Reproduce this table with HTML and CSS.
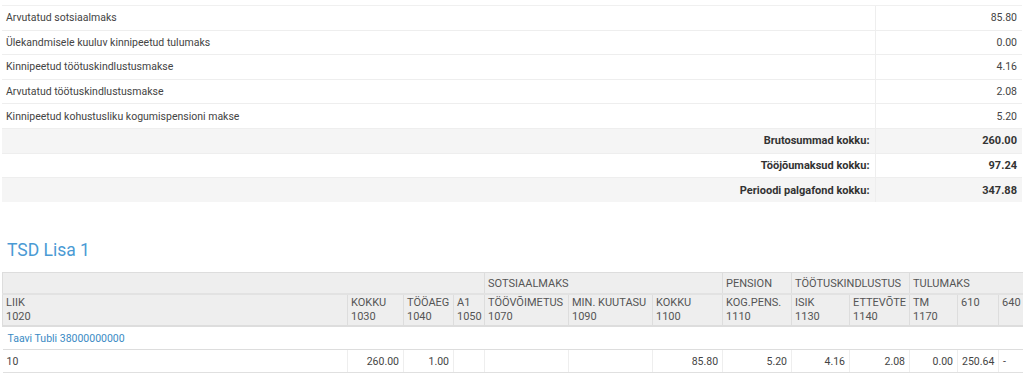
FILE: index.html
```html
<!DOCTYPE html>
<html lang="et">
<head>
<meta charset="utf-8">
<title>Palgafond</title>
<link rel="stylesheet" href="styles.css">
</head>
<body>
<table class="sum">
  <colgroup><col class="c-label"><col class="c-val"></colgroup>
  <tbody>
    <tr><td>Arvutatud sotsiaalmaks</td><td class="num">85.80</td></tr>
    <tr><td>Ülekandmisele kuuluv kinnipeetud tulumaks</td><td class="num">0.00</td></tr>
    <tr><td>Kinnipeetud töötuskindlustusmakse</td><td class="num">4.16</td></tr>
    <tr><td>Arvutatud töötuskindlustusmakse</td><td class="num">2.08</td></tr>
    <tr><td>Kinnipeetud kohustusliku kogumispensioni makse</td><td class="num">5.20</td></tr>
    <tr class="total shade"><td class="num">Brutosummad kokku:</td><td class="num">260.00</td></tr>
    <tr class="total"><td class="num">Tööjõumaksud kokku:</td><td class="num">97.24</td></tr>
    <tr class="total shade"><td class="num">Perioodi palgafond kokku:</td><td class="num">347.88</td></tr>
  </tbody>
</table>

<h2 class="title">TSD Lisa 1</h2>

<table class="tsd">
  <colgroup>
    <col class="w1"><col class="w2"><col class="w3"><col class="w4"><col class="w5"><col class="w6"><col class="w7"><col class="w8"><col class="w9"><col class="w10"><col class="w11"><col class="w12"><col class="w13">
  </colgroup>
  <thead>
    <tr class="group">
      <th colspan="4"></th>
      <th colspan="3">SOTSIAALMAKS</th>
      <th>PENSION</th>
      <th colspan="2">TÖÖTUSKINDLUSTUS</th>
      <th colspan="3" class="last">TULUMAKS</th>
    </tr>
    <tr class="cols">
      <th>LIIK<br>1020</th>
      <th>KOKKU<br>1030</th>
      <th>TÖÖAEG<br>1040</th>
      <th>A1<br>1050</th>
      <th>TÖÖVÕIMETUS<br>1070</th>
      <th>MIN. KUUTASU<br>1090</th>
      <th>KOKKU<br>1100</th>
      <th>KOG.PENS.<br>1110</th>
      <th>ISIK<br>1130</th>
      <th>ETTEVÕTE<br>1140</th>
      <th>TM<br>1170</th>
      <th>610<br>&nbsp;</th>
      <th>640<br>&nbsp;</th>
    </tr>
  </thead>
  <tbody>
    <tr class="person"><td colspan="13"><a href="#">Taavi Tubli 38000000000</a></td></tr>
    <tr class="data">
      <td>10</td>
      <td class="num">260.00</td>
      <td class="num">1.00</td>
      <td></td>
      <td></td>
      <td></td>
      <td class="num">85.80</td>
      <td class="num">5.20</td>
      <td class="num">4.16</td>
      <td class="num">2.08</td>
      <td class="num">0.00</td>
      <td class="num">250.64</td>
      <td>-</td>
    </tr>
  </tbody>
</table>
</body>
</html>
```

FILE: styles.css
```css
html, body {
  margin: 0;
  padding: 0;
  background: #fff;
}
body {
  font-family: Roboto, "Liberation Sans", Arial, sans-serif;
  font-size: 10.5px;
  color: #444;
  padding: 5px 2px 0 2px;
}
table {
  border-collapse: collapse;
  table-layout: fixed;
  width: 1020px;
}
.num { text-align: right; }

/* summary table */
.c-label { width: 873px; }
.c-val { width: 147px; }
.sum td {
  height: 24.6px;
  box-sizing: border-box;
  padding: 0 5px 0 4px;
  border-top: 1px solid #eeeeee;
  vertical-align: middle;
}
.sum td + td { border-left: 1px solid #eeeeee; }
.sum tr:first-child td { border-top: 1px solid #f0f0f0; }
.sum .total td { font-weight: bold; font-size: 11px; color: #333; }
.sum .shade td { background: #f5f5f5; }

.title {
  margin: 36px 0 0 5px;
  font-size: 17.5px;
  font-weight: normal;
  line-height: 24px;
  color: #4a9ad4;
  height: 34px;
}

/* TSD table */
.w1 { width: 345px; }
.w2 { width: 56px; }
.w3 { width: 50px; }
.w4 { width: 31px; }
.w5 { width: 84px; }
.w6 { width: 84px; }
.w7 { width: 70px; }
.w8 { width: 69px; }
.w9 { width: 58px; }
.w10 { width: 60px; }
.w11 { width: 48px; }
.w12 { width: 41px; }
.w13 { width: 24px; }

.tsd th {
  background: #eeeeee;
  font-weight: normal;
  font-size: 11px;
  text-align: left;
  color: #555;
  padding: 0 3px;
  border: 1px solid #dddddd;
  white-space: nowrap;
  overflow: hidden;
}
.tsd th:last-child { border-right: none; }
.tsd .group th {
  height: 20px;
  vertical-align: middle;
  border-bottom: 2px solid #e2e2e2;
}
.tsd .cols th {
  height: 30px;
  vertical-align: middle;
  line-height: 14px;
  border-bottom: 2px solid #dddddd;
}
.tsd td {
  padding: 0 4px;
  height: 22px;
  border-bottom: 1px solid #e0e0e0;
}
.tsd .data td { border-right: 1px solid #eeeeee; }
.tsd .data td:last-child { border-right: none; }
.tsd .person td { padding-left: 5px; border-bottom: 1px solid #dddddd; }
.tsd .person a {
  color: #3a8ac4;
  text-decoration: none;
}
```
